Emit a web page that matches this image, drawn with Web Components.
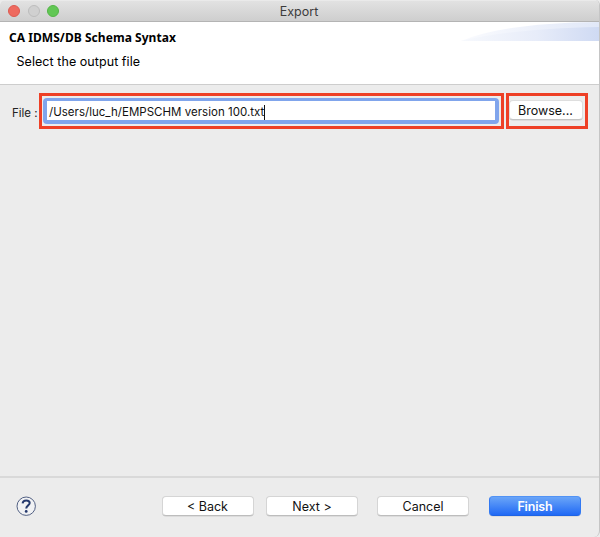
<!DOCTYPE html>
<html lang="en"><head><meta charset="utf-8"><title>Export</title>
<style>html,body{margin:0;width:600px;height:537px;overflow:hidden;background:#ececec;font-family:Inter,"Liberation Sans",sans-serif}</style></head>
<body><export-dialog></export-dialog>
<script>
const define=(name,html)=>customElements.define(name,class extends HTMLElement{
  constructor(){super();this.attachShadow({mode:'open'}).innerHTML=html;}
});
define('title-bar',`<style>
:host{display:grid;grid-template-columns:1fr auto 1fr;align-items:center;height:22px;box-sizing:border-box;padding:1px 8px 0;border-bottom:1px solid #b4b4b4;background:linear-gradient(#f2f2f2 0,#e2e2e2 1px,#cfcfcf 20px);border-radius:5px 5px 0 0}
.lights{display:flex;gap:7.5px}
i{width:12px;height:12px;box-sizing:border-box;border-radius:50%;border:1px solid #dc5a50;background:#ee6a5f}
i:nth-child(2){background:#d0d0d0;border-color:#bcbcbc}i:nth-child(3){background:#62c755;border-color:#53b546}
span{font-size:12.5px;line-height:18px;color:#3c3c3c;padding-top:1px;margin-left:-1px}
</style><div class="lights"><i></i><i></i><i></i></div><span><slot></slot></span>`);
define('wizard-header',`<style>
:host{display:flex;justify-content:space-between;height:63px;box-sizing:border-box;background:#fff;border-bottom:1px solid #cdcdcd;color:#000}
.copy{padding:8px 0 0 9px}
.title{font:bold 12px/16px "Noto Sans",sans-serif;letter-spacing:.05px;white-space:nowrap}
.sub{font-size:12.5px;line-height:17px;letter-spacing:.06px;padding:7px 0 0 7.5px;white-space:nowrap}
svg{display:block;flex:none}
</style><div class="copy"><div class="title"><slot name="title"></slot></div><div class="sub"><slot></slot></div></div>
<svg width="138" height="19"><defs><linearGradient id="a"><stop stop-color="#f7f9fd"/><stop offset=".55" stop-color="#e7ecf9"/><stop offset="1" stop-color="#cfdaf3"/></linearGradient><linearGradient id="b"><stop stop-color="#fafbfe"/><stop offset="1" stop-color="#e1e8f8"/></linearGradient></defs><path d="M0 19Q43 1 138 0V19Z" fill="url(#b)"/><path d="M0 19Q48 7 138 5V19Z" fill="url(#a)"/></svg>`);
define('push-button',`<style>
:host{display:flex;align-items:center;justify-content:center;box-sizing:border-box;width:92px;height:20px;border:1px solid #d5d5d5;border-bottom-color:#bdbdbd;border-radius:4px;background:#fff;color:#111;font-size:12.5px;line-height:18px;box-shadow:0 .5px .5px #0002;white-space:nowrap}
:host([primary]){border-color:#5293f5 #3279f3 #1e63e4;background:linear-gradient(#6aa5f8,#2069f5);color:#fff;font-weight:600;letter-spacing:-.15px}
span{padding:2px 0 0 0}
</style><span><slot></slot></span>`);
define('red-frame',`<style>:host{display:flex;box-sizing:border-box;border:3px solid #ee4026;height:36px}</style><slot></slot>`);
define('text-field',`<style>
:host{display:flex;align-items:center;box-sizing:border-box;width:456px;height:26px;margin:2px 0 0 1px;border:4px solid #80a5ec;border-width:3px 4px 4px 4px;border-radius:4px;background:#fff;color:#111;padding:3px 0 0 2.5px;font-size:11.5px;line-height:18px;letter-spacing:.02px;white-space:nowrap}
i{width:1px;height:15px;background:#111}
</style><span><slot></slot></span><i></i>`);
define('help-icon',`<style>:host{display:block;width:20px;height:20px}svg{display:block}</style>
<svg width="20" height="20" fill="none"><circle cx="10.2" cy="10.2" r="9.2" fill="#f1f2f4" stroke="#526083"/><path d="M6.6 7.3C6.8 5.4 8 4.4 10.2 4.4S13.7 5.4 13.7 7.1C13.7 9.5 10.2 9.4 10.2 12.6" stroke="#25396d" stroke-width="2"/><circle cx="10.2" cy="15.4" r="1.4" fill="#25396d"/></svg>`);
define('export-dialog',`<style>
:host{display:flex;flex-direction:column;width:600px;height:537px;box-sizing:border-box;background:#ececec;border-right:1px solid #c5c5c5;border-radius:5px 5px 6px 6px;overflow:hidden}
main{flex:1;display:flex;align-items:flex-start;padding:8px 0 0 12px}
label{width:26.5px;font-size:11.5px;line-height:18px;color:#222;padding-top:11px;white-space:nowrap}
.field{width:465px;margin-right:2px}.browse{width:82px}
.browse push-button{width:74px;height:20px;margin:4px 0 0;border-color:#dedede #dedede #c4c4c4}
footer{display:flex;align-items:flex-start;height:61px;box-sizing:border-box;border-top:2px solid #d9d9d9;padding:18px 0 0 16px}
help-icon{margin-right:125.5px}.b{margin-right:12.5px}.n{margin-right:19px}.c{margin-right:20px}
</style>
<title-bar>Export</title-bar>
<wizard-header><span slot="title">CA IDMS/DB Schema Syntax</span>Select the output file</wizard-header>
<main><label>File :</label><red-frame class="field"><text-field>/Users/luc_h/EMPSCHM version 100.txt</text-field></red-frame><red-frame class="browse"><push-button>Browse...</push-button></red-frame></main>
<footer><help-icon></help-icon><push-button class="b">&lt; Back</push-button><push-button class="n">Next &gt;</push-button><push-button class="c">Cancel</push-button><push-button primary>Finish</push-button></footer>`);
</script></body></html>
